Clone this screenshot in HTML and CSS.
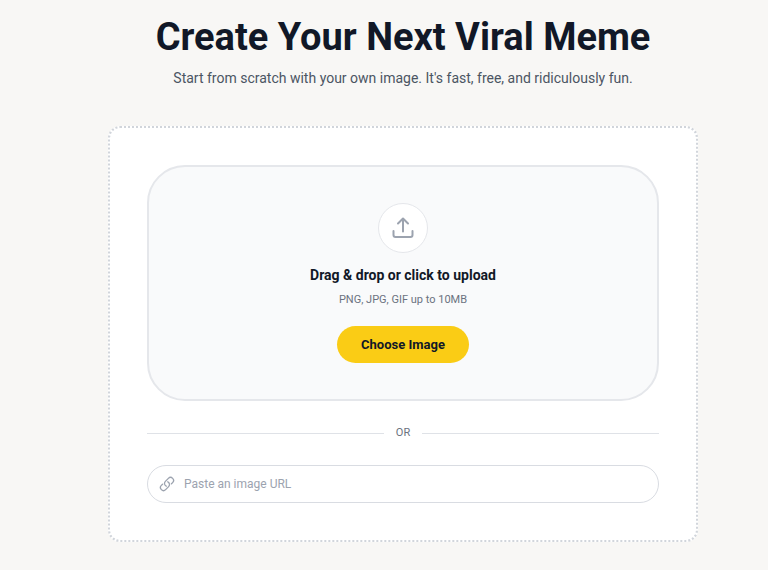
FILE: index.html
```html
<!DOCTYPE html>
<html lang="en">
<head>
  <meta charset="UTF-8" />
  <meta name="viewport" content="width=device-width, initial-scale=1" />
  <title>Meme Maker</title>
  <link rel="stylesheet" href="styles.css">
</head>
<body>

  <main class="page">
    <h1>Create Your Next Viral Meme</h1>
    <p class="subtitle">Start from scratch with your own image. It's fast, free, and ridiculously fun.</p>

    <section class="card">
      <div class="dropzone">
        <div class="upload-icon">
          <svg viewBox="0 0 24 24" aria-hidden="true">
            <path d="M12 15.5V2.5M7 7.5l5-5 5 5M2.5 15v4a2 2 0 0 0 2 2h15a2 2 0 0 0 2-2v-4" />
          </svg>
        </div>
        <h2>Drag &amp; drop or click to upload</h2>
        <p class="hint">PNG, JPG, GIF up to 10MB</p>
        <button type="button" class="choose-btn">Choose Image</button>
      </div>

      <div class="divider"><span>OR</span></div>

      <label class="url-field">
        <svg viewBox="0 0 24 24" aria-hidden="true">
          <path d="M13.19 8.688a4.5 4.5 0 0 1 1.242 7.244l-4.5 4.5a4.5 4.5 0 0 1-6.364-6.364l1.757-1.757m13.35-.622 1.757-1.757a4.5 4.5 0 0 0-6.364-6.364l-4.5 4.5a4.5 4.5 0 0 0 1.242 7.244" />
        </svg>
        <input type="url" placeholder="Paste an image URL" aria-label="Image URL" />
      </label>
    </section>
  </main>

</body>
</html>
```
FILE: styles.css
```css
* {
  box-sizing: border-box;
}
body {
  font-family: Roboto, "Liberation Sans", sans-serif;
  background: #f8f7f5;
  color: #111827;
  margin: 0;
  padding: 13px 70px 28px 108px;
}
h1, h2, p {
  margin: 0;
}
.page {
  max-width: 640px;
  margin: 0 auto;
  text-align: center;
}
h1 {
  font-size: 38px;
  line-height: 48px;
  font-weight: 700;
  white-space: nowrap;
}
.subtitle {
  margin-top: 7px;
  font-size: 14px;
  line-height: 20px;
  color: #4b5563;
}
.card {
  margin-top: 38px;
  padding: 37px;
  background: #fff;
  border: 2px dotted #d1d5db;
  border-radius: 12px;
}
.dropzone {
  display: flex;
  flex-direction: column;
  align-items: center;
  padding: 36px;
  background: #f9fafb;
  border: 2px solid #e5e7eb;
  border-radius: 38px;
}
.upload-icon {
  display: grid;
  place-items: center;
  width: 50px;
  height: 50px;
  background: #fff;
  border: 1px solid #e5e7eb;
  border-radius: 50%;
}
.upload-icon svg {
  width: 24px;
  height: 24px;
}
svg {
  fill: none;
  stroke: #9ca3af;
  stroke-width: 2;
  stroke-linecap: round;
  stroke-linejoin: round;
}
h2 {
  margin-top: 12px;
  font-size: 14px;
  line-height: 20px;
  font-weight: 700;
}
.hint {
  margin-top: 5px;
  font-size: 11px;
  line-height: 20px;
  color: #6b7280;
}
.choose-btn {
  margin-top: 16px;
  padding: 0 24px;
  height: 37px;
  border: none;
  border-radius: 20px;
  background: #facc15;
  color: #111827;
  font: 700 13px/20px Roboto, "Liberation Sans", sans-serif;
  cursor: pointer;
}
.divider {
  display: flex;
  align-items: center;
  gap: 12px;
  margin: 22px 0;
  font-size: 11px;
  line-height: 20px;
  color: #6b7280;
}
.divider::before,
.divider::after {
  content: "";
  flex: 1;
  height: 1px;
  background: #dfe2e7;
}
.url-field {
  display: flex;
  align-items: center;
  gap: 9px;
  height: 38px;
  padding: 0 11px;
  border: 1px solid #d9dce2;
  border-radius: 20px;
}
.url-field svg {
  flex: none;
  width: 16px;
  height: 16px;
}
.url-field input {
  flex: 1;
  min-width: 0;
  padding: 0;
  border: none;
  outline: none;
  background: transparent;
  color: #111827;
  font: 12px/20px Roboto, "Liberation Sans", sans-serif;
}
.url-field input::placeholder {
  color: #9ca3af;
}
```
